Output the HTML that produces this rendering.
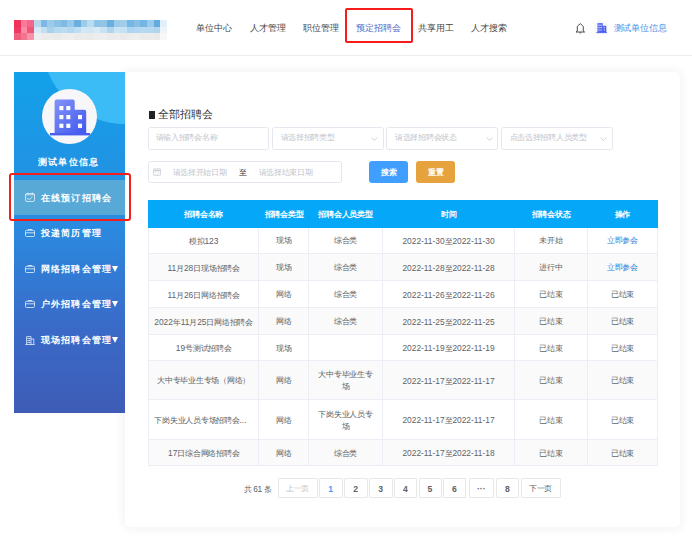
<!DOCTYPE html>
<html><head><meta charset="utf-8">
<style>
*{margin:0;padding:0;box-sizing:border-box}
html,body{width:692px;height:537px;overflow:hidden;background:#fff;font-family:"Liberation Sans",sans-serif;color:#333}
.a{position:absolute}
#hdr{left:0;top:0;width:692px;height:56px;background:#fff;border-bottom:1px solid #ececec}
#logo{left:14px;top:20px;width:153px;height:20px;display:grid;grid-template-columns:repeat(23,1fr);grid-template-rows:repeat(3,1fr);border-radius:1px;filter:blur(0.35px)}
#logo i{display:block}
.nav{top:21px;font-size:9px;letter-spacing:0.15px;line-height:14px;color:#444;white-space:nowrap}
#sb{left:14px;top:72px;width:111px;height:341px;background:linear-gradient(180deg,#12a1ea 0%,#2a8be0 45%,#3a6ac8 75%,#3e5cb6 100%);overflow:hidden}
#card{left:125px;top:72px;width:555px;height:455px;background:#fff;border-radius:5px;box-shadow:0 0 8px 3px rgba(0,0,0,0.045)}
.mi{left:0;width:111px;height:20px;color:#fff;font-size:9px;font-weight:bold;letter-spacing:1.15px;white-space:nowrap}
.mi span{position:absolute;left:27px;top:0;line-height:20px}
.mi svg{position:absolute}
.tri{display:inline-block;width:0;height:0;border-left:3.4px solid transparent;border-right:3.4px solid transparent;border-top:6.2px solid #fff;vertical-align:0px;margin-left:0.1px}
.inp{border:1px solid #e4e7ed;border-radius:2.5px;height:22.5px;background:#fff}
.ph{position:absolute;top:0;line-height:20px;font-size:8px;letter-spacing:-0.27px;color:#c0c4cc;white-space:nowrap}
.chev{position:absolute;left:98.6px;top:8.6px}
.btn{height:22px;border-radius:3px;color:#fff;font-size:8px;font-weight:bold;line-height:24px;text-align:center}
table{border-collapse:collapse;table-layout:fixed;font-size:8px;letter-spacing:-0.25px;color:#606266}
td,th{border:1px solid #ebeef5;text-align:center;vertical-align:middle;line-height:12px;padding:2px 8px 0}
.n{font-size:8.4px;letter-spacing:0}
td.lk{color:#2a82de}
td.nw{white-space:nowrap;overflow:hidden;padding:2px 4px 0}
th{background:#05a7f8;color:#fff;font-weight:bold;border-color:#05a7f8;height:26.5px;padding:2px 1px 0;white-space:nowrap}
tr.s td{background:#fafafa}
.pg{top:478px;height:19.5px;border:1px solid #e8e8e8;border-radius:1px;font-size:8.6px;line-height:20px;text-align:center;color:#606266;font-weight:bold;background:#fff}
</style></head><body>
<div id="hdr" class="a"></div>
<div id="logo" class="a"><i style="background:#f0325a"></i><i style="background:#f77a98"></i><i style="background:#f3678a"></i><i style="background:#b5d8ef"></i><i style="background:#7cb8e3"></i><i style="background:#9ccaea"></i><i style="background:#8cc1e6"></i><i style="background:#7ebae4"></i><i style="background:#98c8ea"></i><i style="background:#6aafe0"></i><i style="background:#9ecbea"></i><i style="background:#b9dcf2"></i><i style="background:#8cc3e6"></i><i style="background:#90c5e7"></i><i style="background:#6ab0df"></i><i style="background:#9ccbea"></i><i style="background:#a0cdeb"></i><i style="background:#76b6e2"></i><i style="background:#88c0e5"></i><i style="background:#74b5e2"></i><i style="background:#9ccbea"></i><i style="background:#62abde"></i><i style="background:#e0eff9"></i><i style="background:#ee3a62"></i><i style="background:#f78ca6"></i><i style="background:#f05577"></i><i style="background:#d6eaf7"></i><i style="background:#c3e0f3"></i><i style="background:#a8d1ee"></i><i style="background:#b8daf1"></i><i style="background:#bcdcf2"></i><i style="background:#b2d8f0"></i><i style="background:#c0def2"></i><i style="background:#d4e9f6"></i><i style="background:#cfe6f5"></i><i style="background:#d8ebf7"></i><i style="background:#c8e3f4"></i><i style="background:#b0d6ef"></i><i style="background:#c9e4f4"></i><i style="background:#c5e2f4"></i><i style="background:#aed5ef"></i><i style="background:#b3d7f0"></i><i style="background:#b6d8f0"></i><i style="background:#b5d8f0"></i><i style="background:#b0d6ef"></i><i style="background:#ebf5fb"></i><i style="background:#ef5f7e"></i><i style="background:#f27590"></i><i style="background:#f591a8"></i><i style="background:#eeeeee"></i><i style="background:#ebebeb"></i><i style="background:#ececec"></i><i style="background:#eaeaea"></i><i style="background:#ededed"></i><i style="background:#eeeeee"></i><i style="background:#ebebeb"></i><i style="background:#ececec"></i><i style="background:#eaeaea"></i><i style="background:#ededed"></i><i style="background:#eeeeee"></i><i style="background:#ebebeb"></i><i style="background:#ececec"></i><i style="background:#eaeaea"></i><i style="background:#ededed"></i><i style="background:#eeeeee"></i><i style="background:#ebebeb"></i><i style="background:#ececec"></i><i style="background:#eaeaea"></i><i style="background:#f7f7f7"></i></div>
<div class="a nav" style="left:196px">单位中心</div>
<div class="a nav" style="left:249.5px">人才管理</div>
<div class="a nav" style="left:302.5px">职位管理</div>
<div class="a nav" style="left:355.5px;color:#5266c6">预定招聘会</div>
<div class="a nav" style="left:417.5px">共享用工</div>
<div class="a nav" style="left:471px">人才搜索</div>
<div class="a" style="left:345.3px;top:7.7px;width:68px;height:35.6px;border:2px solid #f71b1b;border-radius:2px"></div>
<!-- bell -->
<svg class="a" style="left:575px;top:22.6px" width="11" height="11" viewBox="0 0 11 11"><path d="M5.3 0.7 L7.6 2.6 Q8.3 3 8.3 3.8 L8.3 8.1 L9.6 9 L1.0 9 L2.3 8.1 L2.3 3.8 Q2.3 3 3 2.6 Z" fill="none" stroke="#3a3a3a" stroke-width="0.9" stroke-linejoin="round"/><path d="M4.4 9.6 Q5.3 10.5 6.2 9.6" fill="none" stroke="#3a3a3a" stroke-width="0.9"/></svg>
<!-- building small -->
<div class="a" style="left:594.3px;top:21.2px;width:13.5px;height:13.5px;border-radius:50%;background:#f8f8fa"></div>
<svg class="a" style="left:595.5px;top:22px" width="12" height="12" viewBox="0 0 12 12"><defs><linearGradient id="bg1" x1="0" y1="0" x2="1" y2="1"><stop offset="0" stop-color="#6f80f8"/><stop offset="1" stop-color="#3f52ee"/></linearGradient></defs><path d="M1.4 1.4 Q1.4 0.9 1.9 0.9 H6.3 Q6.8 0.9 6.8 1.4 V3.8 H9.8 Q10.3 3.8 10.3 4.3 V10.5 H1.4 Z" fill="url(#bg1)"/><rect x="0.4" y="10.2" width="10.6" height="0.9" fill="#4a5ef0"/><g fill="#dfe3ff"><rect x="2.5" y="2.7" width="1.1" height="1.1"/><rect x="4.5" y="2.7" width="1.1" height="1.1"/><rect x="2.5" y="5.1" width="1.1" height="1.1"/><rect x="4.5" y="5.1" width="1.1" height="1.1"/><rect x="7.8" y="5.1" width="1.1" height="1.1"/><rect x="2.5" y="7.5" width="1.1" height="1.1"/><rect x="4.5" y="7.5" width="1.1" height="1.1"/><rect x="7.8" y="7.5" width="1.1" height="1.1"/></g></svg>
<div class="a nav" style="left:613.5px;top:20.5px;letter-spacing:-0.1px;color:#4192e6">测试单位信息</div>

<div id="card" class="a"></div>

<div id="sb" class="a">
  <div class="a" style="left:28px;top:-114px;width:166px;height:166px;border-radius:50%;background:#3bbcf6"></div>
  <div class="a" style="left:27.5px;top:16.8px;width:55.5px;height:55.5px;border-radius:50%;background:#f7f7f9"></div>
  <svg class="a" style="left:34px;top:27px" width="42" height="37" viewBox="0 0 42 37"><defs><linearGradient id="bg2" x1="0" y1="0" x2="1" y2="1"><stop offset="0" stop-color="#8194f9"/><stop offset="1" stop-color="#4257ee"/></linearGradient></defs><path d="M6.6 2.5 Q6.6 0.5 8.6 0.5 L24.7 0.5 Q26.7 0.5 26.7 2.5 L26.7 10.8 L36.2 10.8 Q38.2 10.8 38.2 12.8 L38.2 34 L6.6 34 Z" fill="url(#bg2)"/><rect x="2" y="34" width="40.3" height="2.4" fill="#4a5ef0"/><g fill="#fff"><rect x="11.4" y="7" width="4" height="4.2"/><rect x="18.3" y="7" width="4" height="4.2"/><rect x="11.4" y="16" width="4" height="4.2"/><rect x="18.3" y="16" width="4" height="4.2"/><rect x="30" y="16" width="4" height="4.2"/><rect x="11.4" y="24.7" width="4" height="4.2"/><rect x="18.3" y="24.7" width="4" height="4.2"/><rect x="30" y="24.7" width="4" height="4.2"/></g></svg>
  <div class="a" style="left:-1.5px;top:83px;width:111px;text-align:center;color:#fff;font-size:9px;font-weight:bold;letter-spacing:1.1px;text-indent:1.1px;line-height:14px">测试单位信息</div>
  <div class="a" style="left:0;top:108px;width:111px;height:35px;background:#58a9d6"></div>
  <div class="a mi" style="top:116px"><svg style="left:11px;top:4px" width="10" height="10" viewBox="0 0 10 10"><path d="M0.5 3 V8 Q0.5 9.5 2 9.5 H8 Q9.5 9.5 9.5 8 V3 Q9.5 1.5 8 1.5 H2 Q0.5 1.5 0.5 3 Z M0.5 2.8 H9.5" fill="none" stroke="#e6f2fa" stroke-width="0.8"/><path d="M2.6 0.6 v1.6 M7.4 0.6 v1.6" stroke="#e6f2fa" stroke-width="0.8"/><path d="M1.8 6.2 L4.3 7.6 L7.3 5" fill="none" stroke="#e6f2fa" stroke-width="0.8"/></svg><span>在线预订招聘会</span></div>
  <div class="a mi" style="top:151px"><svg style="left:11px;top:6px" width="10" height="8" viewBox="0 0 10 8"><rect x="0.5" y="1.3" width="9" height="6.2" rx="1" fill="none" stroke="#e6f2fa" stroke-width="0.8"/><path d="M3.2 1.3 V0.5 H6.8 V1.3 M0.5 3.8 H9.5" fill="none" stroke="#e6f2fa" stroke-width="0.8"/></svg><span>投递简历管理</span></div>
  <div class="a mi" style="top:187px"><svg style="left:11px;top:6px" width="10" height="8" viewBox="0 0 10 8"><rect x="0.5" y="1.3" width="9" height="6.2" rx="1" fill="none" stroke="#e6f2fa" stroke-width="0.8"/><path d="M3.2 1.3 V0.5 H6.8 V1.3 M0.5 3.8 H9.5" fill="none" stroke="#e6f2fa" stroke-width="0.8"/></svg><span>网络招聘会管理<b class="tri"></b></span></div>
  <div class="a mi" style="top:222px"><svg style="left:11px;top:6px" width="10" height="8" viewBox="0 0 10 8"><rect x="0.5" y="1.3" width="9" height="6.2" rx="1" fill="none" stroke="#e6f2fa" stroke-width="0.8"/><path d="M3.2 1.3 V0.5 H6.8 V1.3 M0.5 3.8 H9.5" fill="none" stroke="#e6f2fa" stroke-width="0.8"/></svg><span>户外招聘会管理<b class="tri"></b></span></div>
  <div class="a mi" style="top:258px"><svg style="left:11px;top:6px" width="10" height="9" viewBox="0 0 10 9"><path d="M1.6 8.5 V0.6 H6 V8.5 M6 3 H8.8 V8.5 M0.4 8.5 H9.6" fill="none" stroke="#e6f2fa" stroke-width="0.8"/><g fill="#e6f2fa"><rect x="2.5" y="2" width="1.2" height="1.1"/><rect x="4.1" y="2" width="1.2" height="1.1"/><rect x="2.5" y="4" width="1.2" height="1.1"/><rect x="4.1" y="4" width="1.2" height="1.1"/><rect x="2.5" y="6" width="1.2" height="1.1"/><rect x="4.1" y="6" width="1.2" height="1.1"/></g></svg><span>现场招聘会管理<b class="tri"></b></span></div>
</div>

<div class="a" style="left:9px;top:173px;width:122px;height:48px;border:2px solid #f41e1e;border-radius:3px"></div>
<!-- card content -->
<div class="a" style="left:149px;top:111px;width:6px;height:8px;background:#222"></div>
<div class="a" style="left:157.5px;top:105.5px;font-size:11px;line-height:16px;color:#333">全部招聘会</div>

<div class="a inp" style="left:147.5px;top:127px;width:121.5px"><span class="ph" style="left:7px">请输入招聘会名称</span></div>
<div class="a inp" style="left:271.5px;top:127px;width:112px"><span class="ph" style="left:8px">请选择招聘类型</span><svg class="chev" width="7" height="4" viewBox="0 0 7 4"><path d="M0.6 0.6 L3.5 3.3 L6.4 0.6" fill="none" stroke="#c6c9d0" stroke-width="0.85"/></svg></div>
<div class="a inp" style="left:386px;top:127px;width:112px"><span class="ph" style="left:8px">请选择招聘会状态</span><svg class="chev" width="7" height="4" viewBox="0 0 7 4"><path d="M0.6 0.6 L3.5 3.3 L6.4 0.6" fill="none" stroke="#c6c9d0" stroke-width="0.85"/></svg></div>
<div class="a inp" style="left:500.5px;top:127px;width:112px"><span class="ph" style="left:8px">点击选择招聘人员类型</span><svg class="chev" width="7" height="4" viewBox="0 0 7 4"><path d="M0.6 0.6 L3.5 3.3 L6.4 0.6" fill="none" stroke="#c6c9d0" stroke-width="0.85"/></svg></div>

<div class="a inp" style="left:147.5px;top:161px;width:194px;height:21.5px">
  <svg class="a" style="left:4.6px;top:5.8px" width="8" height="8" viewBox="0 0 8 8"><rect x="0.5" y="0.8" width="7" height="6.8" rx="0.8" fill="none" stroke="#cdd0d6" stroke-width="0.8"/><path d="M0.5 2.4 h7" stroke="#cdd0d6" stroke-width="1.4"/><rect x="2" y="3.8" width="4" height="2.4" fill="none" stroke="#dde0e5" stroke-width="0.6"/></svg>
  <span class="ph" style="left:24px;top:0.8px">请选择开始日期</span>
  <span class="ph" style="left:90px;top:1px;color:#303133;font-size:8px;letter-spacing:0">至</span>
  <span class="ph" style="left:110px;top:0.8px">请选择结束日期</span>
</div>
<div class="a btn" style="left:369px;top:161px;width:39px;background:#409eff">搜索</div>
<div class="a btn" style="left:416px;top:161px;width:39px;background:#e6a23c">重置</div>

<table class="a" style="left:147.8px;top:200.2px;width:509.6px">
<colgroup><col style="width:110.7px"><col style="width:49.9px"><col style="width:73.2px"><col style="width:132.9px"><col style="width:72.1px"><col style="width:70.8px"></colgroup>
<tr><th>招聘会名称</th><th>招聘会类型</th><th>招聘会人员类型</th><th>时间</th><th>招聘会状态</th><th>操作</th></tr>
<tr style="height:26.6px"><td class="nw">模拟<span class="n">123</span></td><td>现场</td><td>综合类</td><td><span class="n">2022-11-30</span>至<span class="n">2022-11-30</span></td><td>未开始</td><td class="lk">立即参会</td></tr>
<tr class="s" style="height:27px"><td class="nw"><span class="n">11</span>月<span class="n">28</span>日现场招聘会</td><td>现场</td><td>综合类</td><td><span class="n">2022-11-28</span>至<span class="n">2022-11-28</span></td><td>进行中</td><td class="lk">立即参会</td></tr>
<tr style="height:27px"><td class="nw"><span class="n">11</span>月<span class="n">26</span>日网络招聘会</td><td>网络</td><td>综合类</td><td><span class="n">2022-11-26</span>至<span class="n">2022-11-26</span></td><td>已结束</td><td>已结束</td></tr>
<tr class="s" style="height:26.8px"><td class="nw"><span class="n">2022</span>年<span class="n">11</span>月<span class="n">25</span>日网络招聘会</td><td>网络</td><td>综合类</td><td><span class="n">2022-11-25</span>至<span class="n">2022-11-25</span></td><td>已结束</td><td>已结束</td></tr>
<tr style="height:26px"><td class="nw"><span class="n">19</span>号测试招聘会</td><td>现场</td><td></td><td><span class="n">2022-11-19</span>至<span class="n">2022-11-19</span></td><td>已结束</td><td>已结束</td></tr>
<tr class="s" style="height:39.4px"><td class="nw">大中专毕业生专场（网络）</td><td>网络</td><td>大中专毕业生专场</td><td><span class="n">2022-11-17</span>至<span class="n">2022-11-17</span></td><td>已结束</td><td>已结束</td></tr>
<tr style="height:39.4px"><td class="nw" style="text-align:left;padding-left:5.5px">下岗失业人员专场招聘会<span class="n">...</span></td><td>网络</td><td>下岗失业人员专场</td><td><span class="n">2022-11-17</span>至<span class="n">2022-11-17</span></td><td>已结束</td><td>已结束</td></tr>
<tr class="s" style="height:26.5px"><td class="nw"><span class="n">17</span>日综合网络招聘会</td><td>网络</td><td>综合类</td><td><span class="n">2022-11-17</span>至<span class="n">2022-11-18</span></td><td>已结束</td><td>已结束</td></tr>
</table>

<div class="a" style="left:243.5px;top:482px;font-size:8px;letter-spacing:-0.3px;line-height:14px;color:#606266">共 <span style="font-size:8.4px">61</span> 条</div>
<div class="a pg" style="left:277.5px;width:40px;color:#c0c4cc;font-weight:normal;font-size:8px;letter-spacing:-0.3px">上一页</div>
<div class="a pg" style="left:319px;width:23.5px;color:#409eff">1</div>
<div class="a pg" style="left:344px;width:23.5px">2</div>
<div class="a pg" style="left:369px;width:23.5px">3</div>
<div class="a pg" style="left:394px;width:23px">4</div>
<div class="a pg" style="left:418.5px;width:23px">5</div>
<div class="a pg" style="left:443px;width:23px">6</div>
<div class="a pg" style="left:468.5px;width:25.5px">···</div>
<div class="a pg" style="left:496px;width:23px">8</div>
<div class="a pg" style="left:520.5px;width:40px;font-weight:normal;font-size:8px;letter-spacing:-0.3px">下一页</div>

</body></html>
